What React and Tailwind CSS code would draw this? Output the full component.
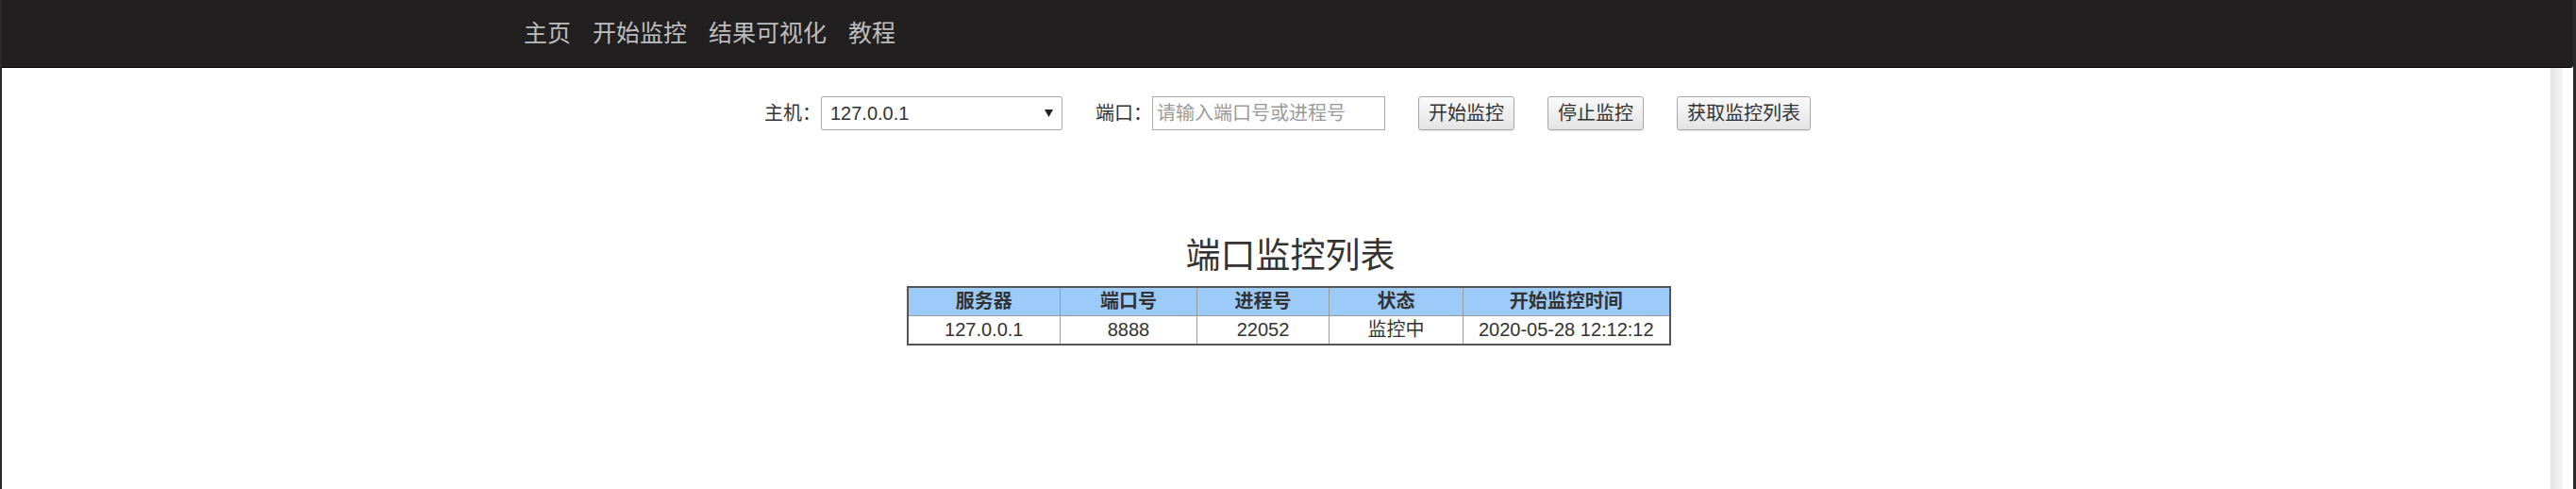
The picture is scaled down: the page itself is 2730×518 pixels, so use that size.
const font = { fontFamily: '"Liberation Sans", "Noto Sans CJK SC", sans-serif' };

const navItems = ['主页', '开始监控', '结果可视化', '教程'];

const rows = [
  { host: '127.0.0.1', port: '8888', pid: '22052', state: '监控中', start: '2020-05-28 12:12:12' },
];

const Button = ({ children }) => (
  <button className="h-[36px] px-[10px] border border-[#a6a6a6] rounded-[3px] bg-gradient-to-b from-[#fafafa] to-[#e4e4e4] text-[20px] text-[#333] leading-none shadow-[0_1px_1px_rgba(0,0,0,0.08)]">
    {children}
  </button>
);

export default function App() {
  return (
    <div
      className="relative h-[518px] w-full overflow-hidden bg-white border-l-2 border-r-[3px] border-[#2a2a2a]"
      style={font}
    >
      {/* top navbar */}
      <nav className="h-[72px] bg-[#221f20] border-b border-[#0c0c0c] rounded-br-[3px] flex items-center pl-[553px] gap-[23px]">
        {navItems.map((item) => (
          <a key={item} className="text-[25px] leading-none text-[#bdbdbd] cursor-pointer">
            {item}
          </a>
        ))}
      </nav>

      {/* controls */}
      <div className="mt-[30px] flex justify-center items-center gap-[35px] text-[20px] text-[#333]">
        <div className="flex items-center">
          <span className="w-[60px] leading-none">主机：</span>
          <div className="w-[256px] h-[36px] border border-[#a9a9a9] rounded-[2px] flex items-center justify-between pl-[9px] pr-[9px] bg-white">
            <span className="text-[20px] text-[#333]">127.0.0.1</span>
            <svg width="9" height="8" viewBox="0 0 9 8">
              <path d="M0 0 H9 L4.5 8 Z" fill="#222" />
            </svg>
          </div>
        </div>
        <div className="flex items-center">
          <span className="w-[60px] leading-none">端口：</span>
          <input
            placeholder="请输入端口号或进程号"
            className="w-[247px] h-[36px] border border-[#a9a9a9] px-[4px] text-[20px] text-[#333] placeholder:text-[#9a9a9a] outline-none"
          />
        </div>
        <Button>开始监控</Button>
        <Button>停止监控</Button>
        <Button>获取监控列表</Button>
      </div>

      {/* list */}
      <h2 className="mt-[115px] text-center text-[37px] leading-none text-[#333] pl-[6px]">端口监控列表</h2>

      <div className="mt-[13px] flex justify-center pl-[2px]">
        <table className="w-[808px] table-fixed border-collapse border-2 border-[#555] text-[20px] text-[#333]">
          <colgroup>
            <col className="w-[162px]" />
            <col className="w-[145px]" />
            <col className="w-[140px]" />
            <col className="w-[142px]" />
            <col className="w-[219px]" />
          </colgroup>
          <thead>
            <tr className="bg-[#9ccbfa] h-[30px]">
              {['服务器', '端口号', '进程号', '状态', '开始监控时间'].map((h) => (
                <th key={h} className="border border-[#9a9a9a] font-bold leading-none p-0">
                  {h}
                </th>
              ))}
            </tr>
          </thead>
          <tbody>
            {rows.map((r) => (
              <tr key={r.pid} className="h-[31px]">
                <td className="border border-[#9a9a9a] text-center leading-none p-0">{r.host}</td>
                <td className="border border-[#9a9a9a] text-center leading-none p-0">{r.port}</td>
                <td className="border border-[#9a9a9a] text-center leading-none p-0">{r.pid}</td>
                <td className="border border-[#9a9a9a] text-center leading-none p-0">{r.state}</td>
                <td className="border border-[#9a9a9a] text-center leading-none p-0">{r.start}</td>
              </tr>
            ))}
          </tbody>
        </table>
      </div>

      {/* scrollbar track overlay */}
      <div className="absolute top-[72px] bottom-0 right-[11px] w-[13px] bg-gradient-to-r from-[#e4e4e4] to-[#f6f6f6]" />
    </div>
  );
}
